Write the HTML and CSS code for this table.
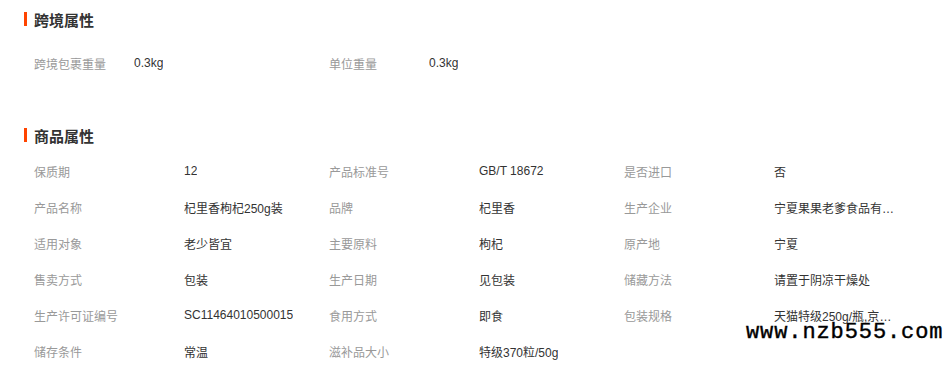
FILE: index.html
```html
<!DOCTYPE html>
<html lang="zh-CN">
<head>
<meta charset="utf-8">
<title>属性</title>
<link rel="stylesheet" href="styles.css">
</head>
<body>
<div class="page">
  <section class="section section-cross">
    <h2 class="section-title">跨境属性</h2>
    <div class="attr-grid attr-grid-cross">
      <div class="attr"><span class="attr-label">跨境包裹重量</span><span class="attr-value">0.3kg</span></div>
      <div class="attr"><span class="attr-label">单位重量</span><span class="attr-value">0.3kg</span></div>
    </div>
  </section>
  <section class="section section-goods">
    <h2 class="section-title">商品属性</h2>
    <div class="attr-grid attr-grid-goods">
      <div class="attr"><span class="attr-label">保质期</span><span class="attr-value">12</span></div>
      <div class="attr"><span class="attr-label">产品标准号</span><span class="attr-value">GB/T 18672</span></div>
      <div class="attr"><span class="attr-label">是否进口</span><span class="attr-value">否</span></div>
      <div class="attr"><span class="attr-label">产品名称</span><span class="attr-value">杞里香枸杞250g装</span></div>
      <div class="attr"><span class="attr-label">品牌</span><span class="attr-value">杞里香</span></div>
      <div class="attr"><span class="attr-label">生产企业</span><span class="attr-value">宁夏果果老爹食品有限公司</span></div>
      <div class="attr"><span class="attr-label">适用对象</span><span class="attr-value">老少皆宜</span></div>
      <div class="attr"><span class="attr-label">主要原料</span><span class="attr-value">枸杞</span></div>
      <div class="attr"><span class="attr-label">原产地</span><span class="attr-value">宁夏</span></div>
      <div class="attr"><span class="attr-label">售卖方式</span><span class="attr-value">包装</span></div>
      <div class="attr"><span class="attr-label">生产日期</span><span class="attr-value">见包装</span></div>
      <div class="attr"><span class="attr-label">储藏方法</span><span class="attr-value">请置于阴凉干燥处</span></div>
      <div class="attr"><span class="attr-label">生产许可证编号</span><span class="attr-value">SC11464010500015</span></div>
      <div class="attr"><span class="attr-label">食用方式</span><span class="attr-value">即食</span></div>
      <div class="attr"><span class="attr-label">包装规格</span><span class="attr-value">天猫特级250g/瓶,京东特级</span></div>
      <div class="attr"><span class="attr-label">储存条件</span><span class="attr-value">常温</span></div>
      <div class="attr"><span class="attr-label">滋补品大小</span><span class="attr-value">特级370粒/50g</span></div>
    </div>
  </section>
  <div class="watermark">www.nzb555.com</div>
</div>
</body>
</html>
```
FILE: styles.css
```css
html, body {
  margin: 0;
  padding: 0;
  background: #fff;
}
body {
  font-family: "Liberation Sans", "Noto Sans CJK SC", sans-serif;
  font-size: 12px;
  color: #333;
}
.page {
  position: relative;
  width: 952px;
  height: 369px;
  overflow: hidden;
}
.section {
  padding-left: 24px;
}
.section-cross {
  padding-top: 7px;
}
.section-goods {
  margin-top: 42px;
}
.section-title {
  margin: 0;
  display: flex;
  align-items: center;
  height: 24px;
  font-family: "Noto Sans CJK SC", sans-serif;
  font-size: 15px;
  font-weight: bold;
  color: #333;
}
.section-title::before {
  content: "";
  display: block;
  width: 3px;
  height: 14px;
  background: #ff4400;
  margin-right: 7px;
}
.attr-grid {
  display: grid;
  padding-left: 10px;
  grid-auto-rows: 36px;
}
.attr-grid-cross {
  margin-top: 14px;
  grid-template-columns: repeat(2, 295px);
}
.attr-grid-goods {
  margin-top: 6px;
  grid-template-columns: repeat(3, 295px);
}
.attr {
  display: flex;
  align-items: center;
}
.attr-label {
  color: #999;
  flex: none;
}
.attr-grid-cross .attr-label {
  width: 100px;
}
.attr-grid-goods .attr-label {
  width: 150px;
}
.attr-value {
  color: #333;
  max-width: 123px;
  white-space: nowrap;
  overflow: hidden;
  text-overflow: ellipsis;
}
.watermark {
  position: absolute;
  left: 746px;
  top: 320px;
  font-family: "Liberation Mono", monospace;
  font-size: 22px;
  letter-spacing: 0.9px;
  line-height: 26px;
  color: #000;
  -webkit-text-stroke: 0.4px #000;
}
```
